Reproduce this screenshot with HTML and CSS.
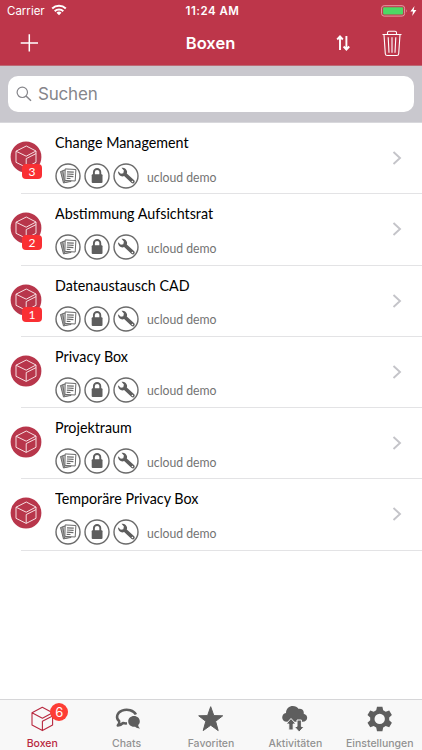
FILE: index.html
```html
<!DOCTYPE html>
<html lang="de">
   <head>
      <meta charset="UTF-8">
      <meta name="viewport" content="width=device-width, initial-scale=1.0">
      <title>Boxen</title>
      <link rel="stylesheet" href="styles.css">
   </head>
   <body>
      <!-- shared icons -->
      <svg class="defs" width="0" height="0">
         <symbol id="box" viewBox="0 0 32 32">
            <circle cx="16" cy="16" r="15.4" fill="#b8364b"/>
            <path d="M16.300 5 26 10V21.300L16.200 26.400 6 21.300V10.200ZM6 10.200 16.200 15.200 26 10M16.200 26.400V17.600L26 12.600" fill="none" stroke="#f6dfe2" stroke-width="1" stroke-linejoin="round"/>
         </symbol>
         <symbol id="docs" viewBox="0 0 26 26">
            <circle cx="13" cy="13" r="12" fill="#fff" stroke="#6b6b6b" stroke-width="1.400"/>
            <g fill="#fff" stroke="#6b6b6b" stroke-width="1">
               <path d="M5.500 8.500 11 7 14 18.500 8.500 20Z" fill="#aaa"/>
               <path d="M7.800 7.500 14 6.500 16 18.500 9.500 19.300Z" fill="#ddd"/>
               <path d="M10.200 5.900 20.900 6.500 20.200 18 9.900 17.400Z"/>
               <path d="M12 8.800 18.800 9.200M11.900 11 18.600 11.400M11.800 13.200 18.400 13.600M11.700 15.300 15.500 15.500" stroke-width="1.200"/>
            </g>
         </symbol>
         <symbol id="lock" viewBox="0 0 26 26">
            <circle cx="13" cy="13" r="12" fill="#fff" stroke="#6b6b6b" stroke-width="1.400"/>
            <rect x="7.700" y="11.300" width="10.800" height="8.800" rx="1" fill="#5e5e5e"/>
            <path d="M9.900 12V9.200a3.200 3.200 0 0 1 6.400 0V12" fill="none" stroke="#5e5e5e" stroke-width="1.900"/>
         </symbol>
         <symbol id="wrench" viewBox="0 0 26 26">
            <circle cx="13" cy="13" r="12" fill="#fff" stroke="#6b6b6b" stroke-width="1.400"/>
            <path d="M8.500 4.800C10.900 4.100 13.500 5.800 14 8.200 14.200 9.100 14.100 9.800 13.800 10.500L21.200 17.200C22.700 19 20.600 21.500 18.600 20L11.100 13.100C8.100 14.200 4.900 12 5 8.300L7.900 10.800 10.300 10.200 10.900 7.600Z" fill="#5e5e5e"/>
            <circle cx="19.400" cy="18.500" r=".8" fill="#fff"/>
         </symbol>
         <symbol id="chevron" viewBox="0 0 10 16">
            <path d="M1.500 2 8 8 1.500 14" fill="none" stroke="#c4c4c9" stroke-width="1.900"/>
         </symbol>
      </svg>

      <header class="header">
         <div class="status">
            <div class="carrier">
               <span>Carrier</span>
               <svg width="16" height="12" viewBox="0 0 16 12" fill="none" stroke="#fff" stroke-width="2">
                  <path d="M1.200 4.500a9.800 9.800 0 0 1 13.600 0M3.700 7.200a6.200 6.200 0 0 1 8.600 0"/>
                  <path d="M8 11.300 5.500 8.800a3.600 3.600 0 0 1 5 0Z" fill="#fff" stroke="none"/>
               </svg>
            </div>
            <div class="time">11:24 AM</div>
            <div class="power">
               <svg width="37" height="12" viewBox="0 0 37 12">
                  <rect x=".6" y=".7" width="23" height="10.400" rx="2.500" fill="none" stroke="#e59aa4"/>
                  <rect x="2.100" y="2.200" width="20" height="7.400" rx="1" fill="#4cd964"/>
                  <path d="M25 4.200q1.500 1.700 0 3.400Z" fill="#e59aa4"/>
                  <path d="M33.500 1 29.400 6.600H32L31.200 10.900 35.400 5.100H32.700Z" fill="#fff"/>
               </svg>
            </div>
         </div>
         <nav class="navbar">
            <svg class="add" width="20" height="20" viewBox="0 0 20 20" stroke="#fff" stroke-width="1.500">
               <path d="M10.300 1.200V18.500M1.700 9.900H19"/>
            </svg>
            <h1 class="title">Boxen</h1>
            <div class="actions">
               <svg width="14" height="18" viewBox="0 0 14 18" fill="none" stroke="#fff" stroke-width="1.900">
                  <path d="M4 16V3M1.200 5.500 4 2.400 6.800 5.500M10.400 2V15M7.600 12.500 10.400 15.600 13.200 12.500"/>
               </svg>
               <svg width="20" height="27" viewBox="0 0 20 27" fill="none" stroke="#fff" stroke-width="1.100">
                  <path d="M.5 4.500H19.500M5.500 4.300V2.800Q5.500 1.300 7 1.300H13Q14.500 1.300 14.500 2.800V4.300M2 4.800 3.300 23.800Q3.500 25.500 5.200 25.500H14.800Q16.500 25.500 16.700 23.800L18 4.800M6.200 7.200 7 22.800M10 7.200V22.800M13.800 7.200 13 22.800"/>
               </svg>
            </div>
         </nav>
      </header>

      <div class="search">
         <div class="field">
            <svg width="16" height="16" viewBox="0 0 16 16" fill="none" stroke="#85858a" stroke-width="1.200">
               <circle cx="6.300" cy="6.300" r="5.200"/>
               <path d="M10 10 15 14.800" stroke-width="1.500"/>
            </svg>
            <span>Suchen</span>
         </div>
      </div>

      <ul class="list">
         <li class="row">
            <div class="avatar"><svg><use href="#box"/></svg><span class="count">3</span></div>
            <div class="content">
               <div class="name">Change Management</div>
               <div class="meta">
                  <svg><use href="#docs"/></svg><svg><use href="#lock"/></svg><svg><use href="#wrench"/></svg>
                  <span>ucloud demo</span>
               </div>
            </div>
            <svg class="chevron"><use href="#chevron"/></svg>
         </li>
         <li class="row">
            <div class="avatar"><svg><use href="#box"/></svg><span class="count">2</span></div>
            <div class="content">
               <div class="name">Abstimmung Aufsichtsrat</div>
               <div class="meta">
                  <svg><use href="#docs"/></svg><svg><use href="#lock"/></svg><svg><use href="#wrench"/></svg>
                  <span>ucloud demo</span>
               </div>
            </div>
            <svg class="chevron"><use href="#chevron"/></svg>
         </li>
         <li class="row">
            <div class="avatar"><svg><use href="#box"/></svg><span class="count">1</span></div>
            <div class="content">
               <div class="name">Datenaustausch CAD</div>
               <div class="meta">
                  <svg><use href="#docs"/></svg><svg><use href="#lock"/></svg><svg><use href="#wrench"/></svg>
                  <span>ucloud demo</span>
               </div>
            </div>
            <svg class="chevron"><use href="#chevron"/></svg>
         </li>
         <li class="row">
            <div class="avatar"><svg><use href="#box"/></svg></div>
            <div class="content">
               <div class="name">Privacy Box</div>
               <div class="meta">
                  <svg><use href="#docs"/></svg><svg><use href="#lock"/></svg><svg><use href="#wrench"/></svg>
                  <span>ucloud demo</span>
               </div>
            </div>
            <svg class="chevron"><use href="#chevron"/></svg>
         </li>
         <li class="row">
            <div class="avatar"><svg><use href="#box"/></svg></div>
            <div class="content">
               <div class="name">Projektraum</div>
               <div class="meta">
                  <svg><use href="#docs"/></svg><svg><use href="#lock"/></svg><svg><use href="#wrench"/></svg>
                  <span>ucloud demo</span>
               </div>
            </div>
            <svg class="chevron"><use href="#chevron"/></svg>
         </li>
         <li class="row">
            <div class="avatar"><svg><use href="#box"/></svg></div>
            <div class="content">
               <div class="name">Temporäre Privacy Box</div>
               <div class="meta">
                  <svg><use href="#docs"/></svg><svg><use href="#lock"/></svg><svg><use href="#wrench"/></svg>
                  <span>ucloud demo</span>
               </div>
            </div>
            <svg class="chevron"><use href="#chevron"/></svg>
         </li>
      </ul>

      <footer class="tabs">
         <div class="tab active">
            <div class="icon">
               <svg width="28" height="28" viewBox="0 0 28 28" fill="none" stroke="#b8283f" stroke-width="1.100" stroke-linejoin="round">
                  <path d="M14.300 2.200 24.600 7.800V20L14.400 25.600 4 20V7.800ZM4 7.800 14.400 13.200 24.600 7.800M14.400 25.600V16.300L24.600 10.900"/>
               </svg>
               <span class="badge">6</span>
            </div>
            <span>Boxen</span>
         </div>
         <div class="tab">
            <div class="icon">
               <svg width="28" height="28" viewBox="0 0 28 28">
                  <path d="M14 18.300C12.500 18.500 11.200 18.300 10 18 8.700 19.300 7 20.200 4.800 20.500 6 19.300 6.600 17.800 6.200 16.300A9.700 7.100 0 1 1 22.900 9.500" fill="none" stroke="#5e5e5e" stroke-width="2.500" stroke-linejoin="round"/>
                  <path d="M21 11c3.300 0 5.800 2.300 5.800 5.300 0 1.600-.6 2.900-1.600 3.800.1 1.400.8 2.500 1.800 3.300-2 .1-3.700-.6-4.800-1.700-4 .6-7-1.900-7-5.400 0-3 2.500-5.300 5.800-5.300Z" fill="#5e5e5e"/>
               </svg>
            </div>
            <span>Chats</span>
         </div>
         <div class="tab">
            <div class="icon">
               <svg width="28" height="28" viewBox="0 0 28 28" fill="#5e5e5e" stroke="#5e5e5e" stroke-linejoin="round">
                  <path d="M13.700 1.700 16.800 10.600 25.700 10.800 18.600 16.300 21.200 25.600 13.700 20.200 6.200 25.600 8.800 16.300 1.700 10.800 10.600 10.600Z"/>
               </svg>
            </div>
            <span>Favoriten</span>
         </div>
         <div class="tab">
            <div class="icon">
               <svg width="28" height="28" viewBox="0 0 28 28" fill="#5e5e5e">
                  <path d="M6 16.800C-.2 16.800-.2 8.700 5 8 5-.2 14.700-.8 17.700 3.900 21 3.500 23.300 5.700 22.700 8.700 27.800 10 27.200 16.600 21.500 16.800Z"/>
                  <path d="M10 13.500 15 19H12.200V25H7.800V19H5ZM18.200 27 13.200 21.500H16V15H20.400V21.500H23.200Z" stroke="#f8f8f8"/>
               </svg>
            </div>
            <span>Aktivitäten</span>
         </div>
         <div class="tab">
            <div class="icon">
               <svg width="28" height="28" viewBox="0 0 28 28">
                  <path d="M11 1.700H16.400L17.200 5.300 19.700 6.700 23.200 5.500 25.900 10.100 23.200 12.500V15.300L25.900 17.700 23.200 22.300 19.700 21.100 17.200 22.500 16.400 26.200H11L10.200 22.500 7.700 21.100 4.200 22.300 1.500 17.700 4.200 15.300V12.500L1.500 10.100 4.200 5.500 7.700 6.700 10.200 5.300Z" fill="#5e5e5e"/>
                  <circle cx="13.700" cy="13.900" r="5.200" fill="#f8f8f8"/>
               </svg>
            </div>
            <span>Einstellungen</span>
         </div>
      </footer>
   </body>
</html>
```
FILE: styles.css
```css
* {
   box-sizing: border-box;
}
body {
   margin: 0;
   height: 100vh;
   display: flex;
   flex-direction: column;
   overflow: hidden;
   background: #fff;
   font-family: Inter, "Liberation Sans", sans-serif;
}
svg {
   display: block;
   flex: none;
}
.defs {
   position: absolute;
}

/* header */
.header {
   height: 66px;
   flex: none;
   background: #bd364a;
   border-bottom: 1px solid #bc6873;
   color: #fff;
}
.status {
   display: grid;
   grid-template-columns: 1fr auto 1fr;
   align-items: center;
   height: 22px;
   padding: 0 4px 0 7px;
   font-size: 11.5px;
}
.carrier {
   display: flex;
   align-items: center;
   gap: 6px;
}
.carrier svg {
   margin-top: -2px;
}
.time {
   font-weight: 600;
   letter-spacing: 0.5px;
}
.power {
   display: flex;
   justify-content: flex-end;
}
.navbar {
   display: grid;
   grid-template-columns: 1fr auto 1fr;
   align-items: center;
   height: 42px;
   padding: 0 20px 0 19px;
}
.title {
   margin: 0;
   font-size: 16.5px;
   font-weight: 600;
}
.actions {
   display: flex;
   align-items: center;
   justify-content: flex-end;
   gap: 32px;
}

/* search */
.search {
   height: 57px;
   flex: none;
   padding: 10px 8px 11px;
   background: #c9c8ce;
   border-bottom: 1px solid #d8d8dc;
}
.field {
   display: flex;
   align-items: center;
   gap: 6px;
   height: 36px;
   padding-left: 8px;
   border-radius: 10px;
   background: #fff;
   color: #85858a;
   font-size: 17px;
   letter-spacing: -0.2px;
}

/* list */
.list {
   flex: 1;
   margin: 0;
   padding: 0;
   list-style: none;
   font-family: Lato, sans-serif;
}
.row {
   display: flex;
   height: 71.25px;
   padding: 0 20px 0 10px;
   background: linear-gradient(#e3e3e5, #e3e3e5) 21px 100% / 100% 1px no-repeat;
}
.avatar {
   position: relative;
   width: 32px;
   margin: 18px 13px 0 0;
}
.avatar svg {
   width: 32px;
   height: 32px;
}
.count {
   position: absolute;
   left: 12px;
   top: 23px;
   width: 20px;
   height: 15px;
   border-radius: 4px;
   background: #f92f33;
   color: #fff;
   font-size: 12px;
   line-height: 15px;
   text-align: center;
}
.content {
   flex: 1;
   padding-top: 9px;
}
.name {
   height: 20px;
   color: #000;
   font-size: 15px;
   line-height: 20px;
   transform: scaleX(0.953);
   transform-origin: left;
}
.meta {
   display: flex;
   align-items: center;
   gap: 3px;
   margin-top: 11px;
   color: #737373;
   font-size: 13px;
}
.meta svg {
   width: 26px;
   height: 26px;
}
.meta span {
   margin: 1px 0 0 5px;
   transform: scaleX(0.94);
   transform-origin: left;
}
.chevron {
   width: 10px;
   height: 16px;
   margin-top: 27px;
}

/* tab bar */
.tabs {
   display: grid;
   grid-template-columns: repeat(5, 1fr);
   height: 51px;
   flex: none;
   background: #f8f8f8;
   border-top: 1px solid #d6d6d8;
}
.tab {
   display: flex;
   flex-direction: column;
   align-items: center;
   padding-top: 5px;
   color: #929292;
   font-size: 10.5px;
   line-height: 15px;
   font-weight: 500;
}
.tab.active {
   color: #b8283f;
}
.icon {
   position: relative;
   height: 31px;
}
.badge {
   position: absolute;
   left: 22px;
   top: -2px;
   width: 18px;
   height: 18px;
   border-radius: 50%;
   background: #fd3d35;
   color: #fff;
   font-size: 13px;
   font-weight: 400;
   line-height: 18px;
   text-align: center;
}
```
